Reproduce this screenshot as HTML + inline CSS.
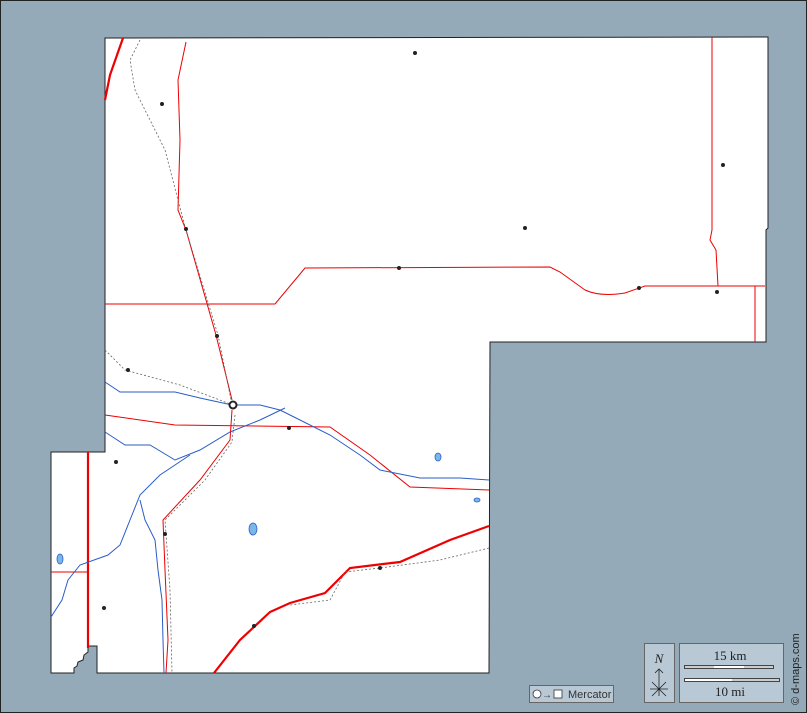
<!DOCTYPE html>
<html><head><style>html,body{margin:0;padding:0}body{width:807px;height:713px;overflow:hidden;background:#95aab9}</style></head><body>
<svg width="807" height="713" viewBox="0 0 807 713" xmlns="http://www.w3.org/2000/svg" style="display:block">
<rect x="0.5" y="0.5" width="806" height="712" fill="#95aab9" stroke="#222"/>
<path d="M105,38 L768,37 L768,228 L766,230 L766,342 L490,342 L489,673 L97,673 L97,646 L88,646 L88,652 L84,655 L83,660 L78,662 L77,666 L74,668 L74,673 L51,673 L51,452 L105,452 Z" fill="#fff" stroke="#222" stroke-width="1"/>
<g fill="none" stroke="#e00" stroke-width="1">
<path d="M105,304 L275,304 L305,268 L550,267 L560,272 L585,290 Q600,297 625,293 L645,286 L765,286"/>
<path d="M755,286 L755,342"/>
<path d="M712,37 L712,230 L710,240 L716,250 L718,286"/>
<path d="M186,42 L178,80 L180,140 L178,210 L186,230 L216,335 L232,400"/>
<path d="M105,415 L175,425 L330,427 L370,455 L410,487 L489,490"/>
<path d="M232,410 L230,440 L200,480 L163,520 L165,570 L168,640 L166,673"/>
<path d="M51,572 L88,572"/>
</g>
<g fill="none" stroke="#e00" stroke-width="2.2">
<path d="M123,38 L110,75 L105,100"/>
<path d="M88,452 L88,648"/>
<path d="M489,526 L450,540 L400,562 L350,568 L325,593 L290,603 L270,612 L240,640 L214,673"/>
</g>
<g fill="none" stroke="#666" stroke-width="0.8" stroke-dasharray="2,2">
<path d="M140,40 L130,60 L135,90 L165,150 L178,200 L186,230 L218,335 L232,405"/>
<path d="M105,350 L125,370 L180,385 L233,405"/>
<path d="M235,415 L232,442 L205,480 L165,520 L170,590 L172,673"/>
<path d="M489,548 L440,560 L380,568 L345,572 L330,600 L290,605"/>
</g>
<g fill="none" stroke="#2a5cc8" stroke-width="1">
<path d="M105,382 L120,392 L150,392 L175,392 L200,398 L232,405 L260,405 L280,410 L300,420 L330,435 L360,455 L380,470 L420,478 L460,478 L489,480"/>
<path d="M105,432 L125,445 L150,445 L175,460 L200,450 L230,432 L260,420 L285,408"/>
<path d="M190,455 L160,475 L140,495 L130,520 L120,545 L108,555 L80,565 L68,580 L62,600 L51,617"/>
<path d="M140,500 L145,520 L155,540 L158,570 L162,600 L163,640 L164,673"/>
</g>
<g fill="#7ab8ea" stroke="#2a5cc8" stroke-width="0.8">
<ellipse cx="60" cy="559" rx="3" ry="5"/>
<ellipse cx="253" cy="529" rx="4" ry="6"/>
<ellipse cx="438" cy="457" rx="3" ry="4"/>
<ellipse cx="477" cy="500" rx="3" ry="2"/>
</g>
<g fill="#222">
<circle cx="415" cy="53" r="2"/><circle cx="162" cy="104" r="2"/><circle cx="723" cy="165" r="2"/>
<circle cx="186" cy="229" r="2"/><circle cx="525" cy="228" r="2"/><circle cx="399" cy="268" r="2"/>
<circle cx="639" cy="288" r="2"/><circle cx="717" cy="292" r="2"/><circle cx="217" cy="336" r="2"/>
<circle cx="128" cy="370" r="2"/><circle cx="289" cy="428" r="2"/><circle cx="116" cy="462" r="2"/>
<circle cx="165" cy="534" r="2"/><circle cx="380" cy="568" r="2"/><circle cx="104" cy="608" r="2"/>
<circle cx="254" cy="626" r="2"/>
</g>
<circle cx="233" cy="405" r="3.5" fill="#fff" stroke="#222" stroke-width="2"/>
<rect x="529.5" y="685.5" width="84" height="17" fill="#b8c8d4" stroke="#666"/>
<circle cx="537" cy="694" r="4" fill="#fff" stroke="#333" stroke-width="0.8"/>
<text x="542" y="698" font-family="Liberation Sans, sans-serif" font-size="10" fill="#333">→</text>
<rect x="554" y="690" width="8" height="8" fill="#fff" stroke="#333" stroke-width="0.8"/>
<text x="568" y="698" font-family="Liberation Sans, sans-serif" font-size="11" fill="#333">Mercator</text>
<rect x="644.5" y="643.5" width="30" height="59" fill="#b8c8d4" stroke="#666"/>
<text x="659" y="663" text-anchor="middle" font-family="Liberation Serif, serif" font-style="italic" font-size="13" fill="#222">N</text>
<path d="M659,669 L659,696 M655,673 L659,669 L663,673 M650,689 L668,689 M652,682 L666,696 M666,682 L652,696" stroke="#222" stroke-width="0.8" fill="none"/>
<rect x="679.5" y="643.5" width="104" height="59" fill="#b8c8d4" stroke="#666"/>
<text x="730" y="660" text-anchor="middle" font-family="Liberation Serif, serif" font-size="13" fill="#222">15 km</text>
<rect x="684.5" y="665.5" width="89" height="3" fill="#ccc" stroke="#222" stroke-width="0.8"/>
<rect x="714" y="666" width="30" height="2" fill="#fff"/>
<rect x="684.5" y="678.5" width="95" height="3" fill="#ccc" stroke="#222" stroke-width="0.8"/>
<rect x="685" y="679" width="47" height="2" fill="#fff"/>
<text x="730" y="696" text-anchor="middle" font-family="Liberation Serif, serif" font-size="13" fill="#222">10 mi</text>
<text transform="translate(799,705) rotate(-90)" font-family="Liberation Sans, sans-serif" font-size="11" fill="#222">© d-maps.com</text>
</svg>
</body></html>
